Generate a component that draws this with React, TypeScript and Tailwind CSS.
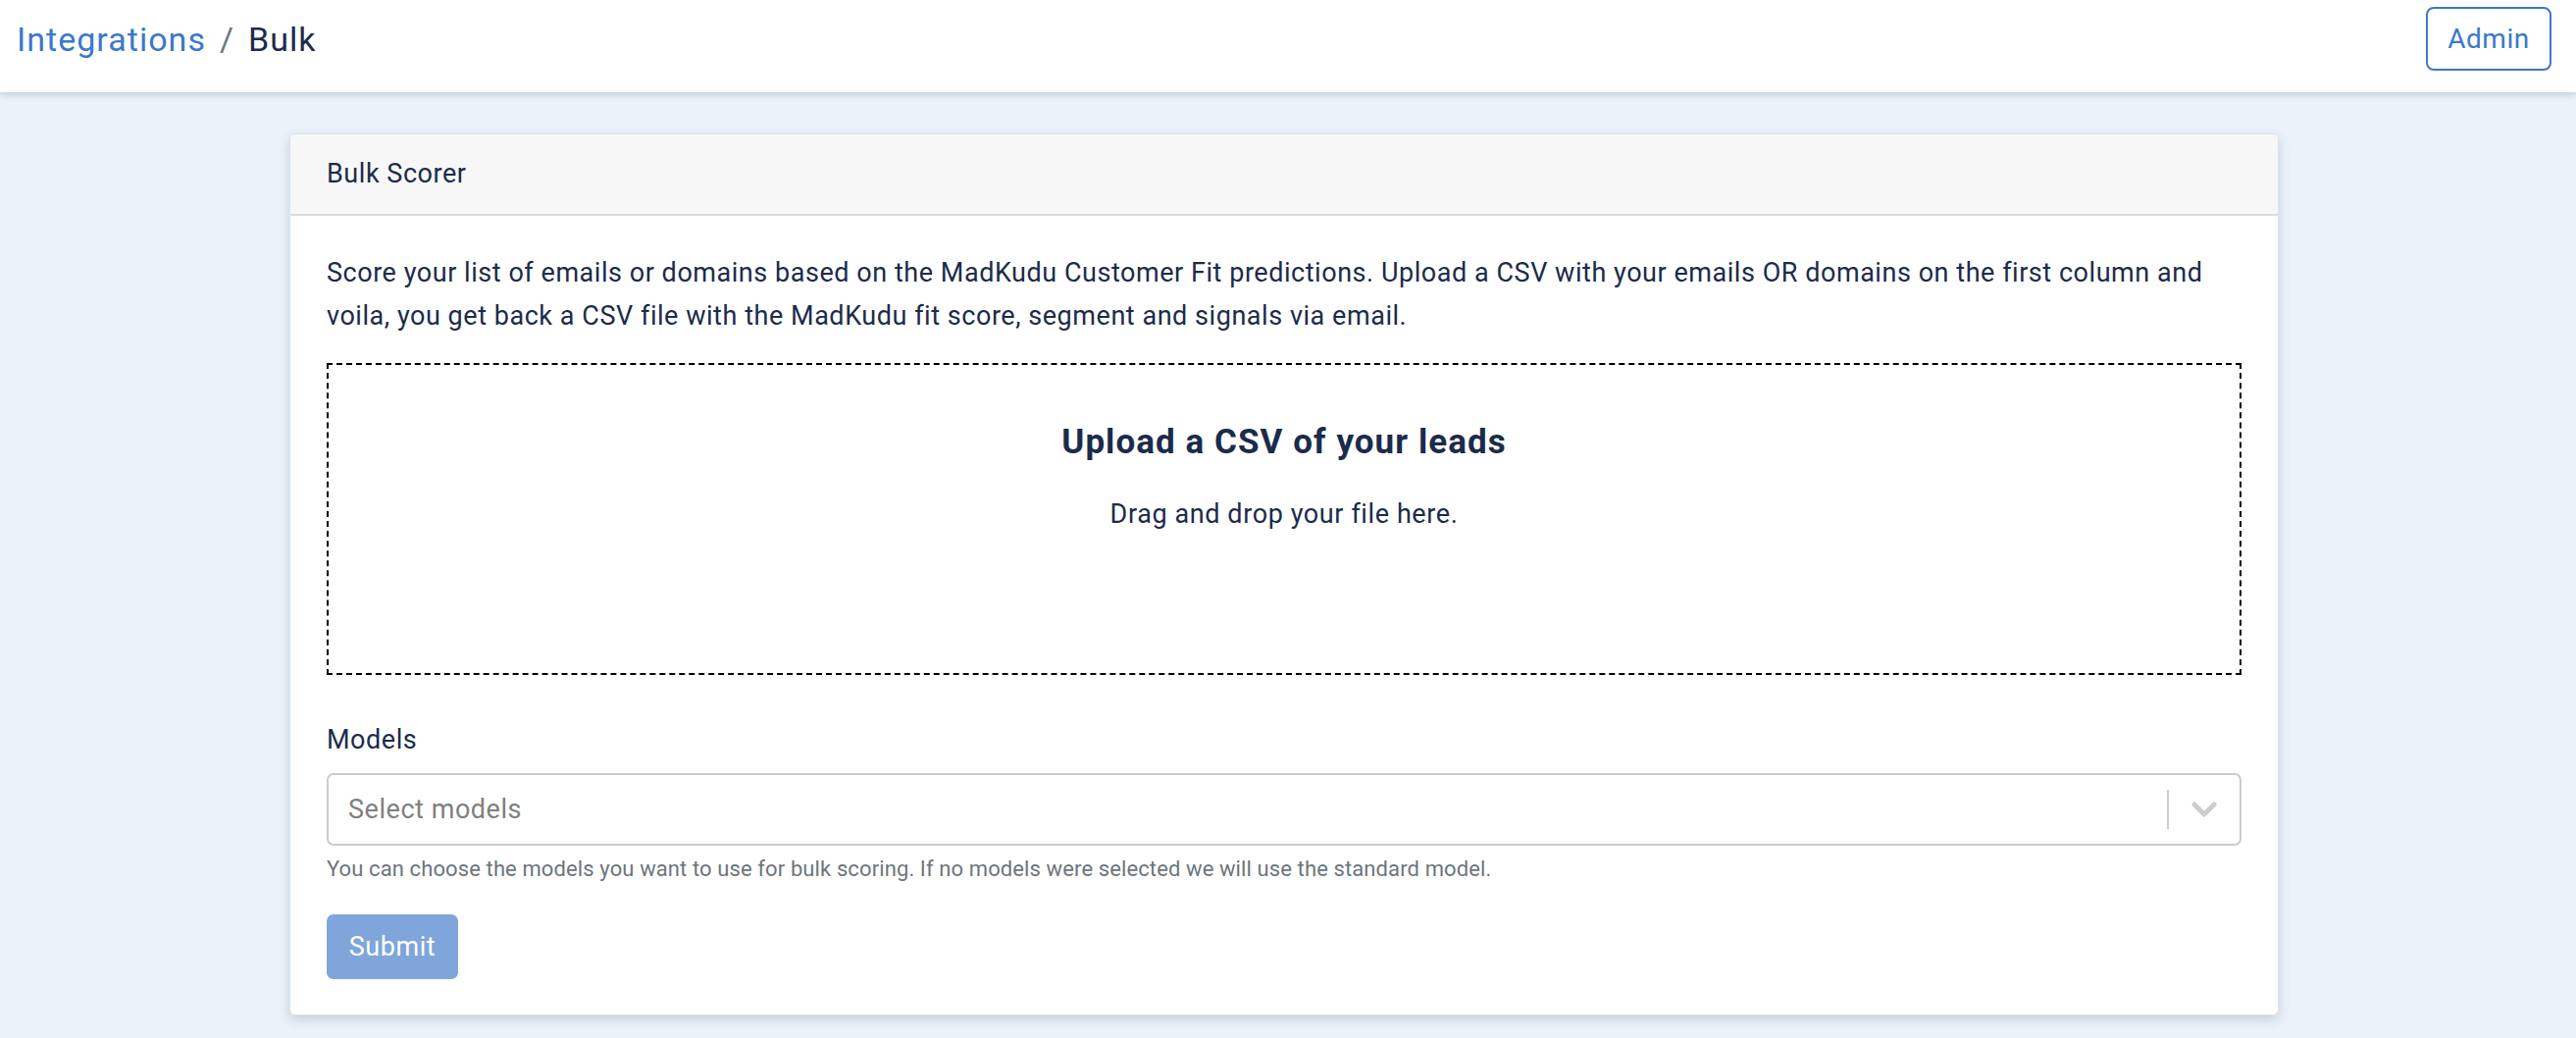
import React from 'react';

const font = { fontFamily: 'Roboto, "Noto Sans", sans-serif' };

const Header: React.FC = () => (
    <header className="h-[94px] bg-white shadow-[0_2px_8px_rgba(0,0,0,0.18)] flex items-start justify-between pt-[7px] pl-[17px] pr-[25px] relative z-10">
        <div className="h-[65px] flex items-center text-[34px] leading-none tracking-[0.03em]">
            <a className="text-[#3b78cc]">Integrations</a>
            <span className="mx-[14px] text-[#6c757d]">/</span>
            <span className="text-[#1c2b4b]">Bulk</span>
        </div>
        <button className="h-[65px] w-[128px] rounded-[8px] border-2 border-[#3b78cc] text-[#3b78cc] text-[28px] tracking-[0.02em]">
            Admin
        </button>
    </header>
);

const ModelSelect: React.FC = () => (
    <div className="h-[74px] rounded-[7px] border-2 border-[#cccccc] flex items-center">
        <span className="flex-1 pl-[20px] text-[27px] text-[#808080] tracking-[0.02em]">Select models</span>
        <span className="w-[2px] h-[40px] bg-[#cccccc]" />
        <span className="w-[72px] flex items-center justify-center">
            <svg width="26" height="16" viewBox="0 0 26 16" fill="none">
                <path d="M3 3l10 10 10-10" stroke="#cccccc" strokeWidth="5" strokeLinecap="round" strokeLinejoin="round" />
            </svg>
        </span>
    </div>
);

const App: React.FC = () => {
    return (
        <div className="min-h-[1058px] bg-[#ebf2fa] text-[#1c2b4b]" style={font}>
            <Header />
            <main className="pt-[42px] pb-[25px]">
                <div className="ml-[295px] w-[2028px] bg-white rounded-[6px] border border-[#dfe3e8] shadow-[0_4px_12px_rgba(30,50,80,0.18)] overflow-hidden">
                    <div className="h-[83px] bg-[#f7f7f7] border-b-2 border-[#dcdcdc] px-[37px] flex items-center text-[27px] tracking-[0.02em]">
                        Bulk Scorer
                    </div>
                    <div className="px-[37px] pt-[36px] pb-[36px]">
                        <p className="text-[27px] leading-[44px] tracking-[0.02em]">
                            Score your list of emails or domains based on the MadKudu Customer Fit predictions. Upload a CSV with your emails OR domains on the first column and voila, you get back a CSV file with the MadKudu fit score, segment and signals via email.
                        </p>
                        <div className="mt-[26px] h-[318px] border-2 border-dashed border-black flex flex-col items-center pt-[58px]">
                            <h3 className="text-[35px] font-bold leading-[42px] tracking-[0.03em]">Upload a CSV of your leads</h3>
                            <p className="mt-[34px] text-[27px] leading-[36px] tracking-[0.022em]">Drag and drop your file here.</p>
                        </div>
                        <label className="block mt-[48px] mb-[16px] text-[27px] leading-[36px] tracking-[0.02em]">Models</label>
                        <ModelSelect />
                        <p className="mt-[11px] text-[22px] leading-[26px] text-[#6c757d] tracking-[0.005em]">
                            You can choose the models you want to use for bulk scoring. If no models were selected we will use the standard model.
                        </p>
                        <button className="mt-[33px] h-[66px] w-[134px] rounded-[7px] bg-[#80a5da] text-white text-[27px] tracking-[0.02em]">
                            Submit
                        </button>
                    </div>
                </div>
            </main>
        </div>
    );
};

export default App;
